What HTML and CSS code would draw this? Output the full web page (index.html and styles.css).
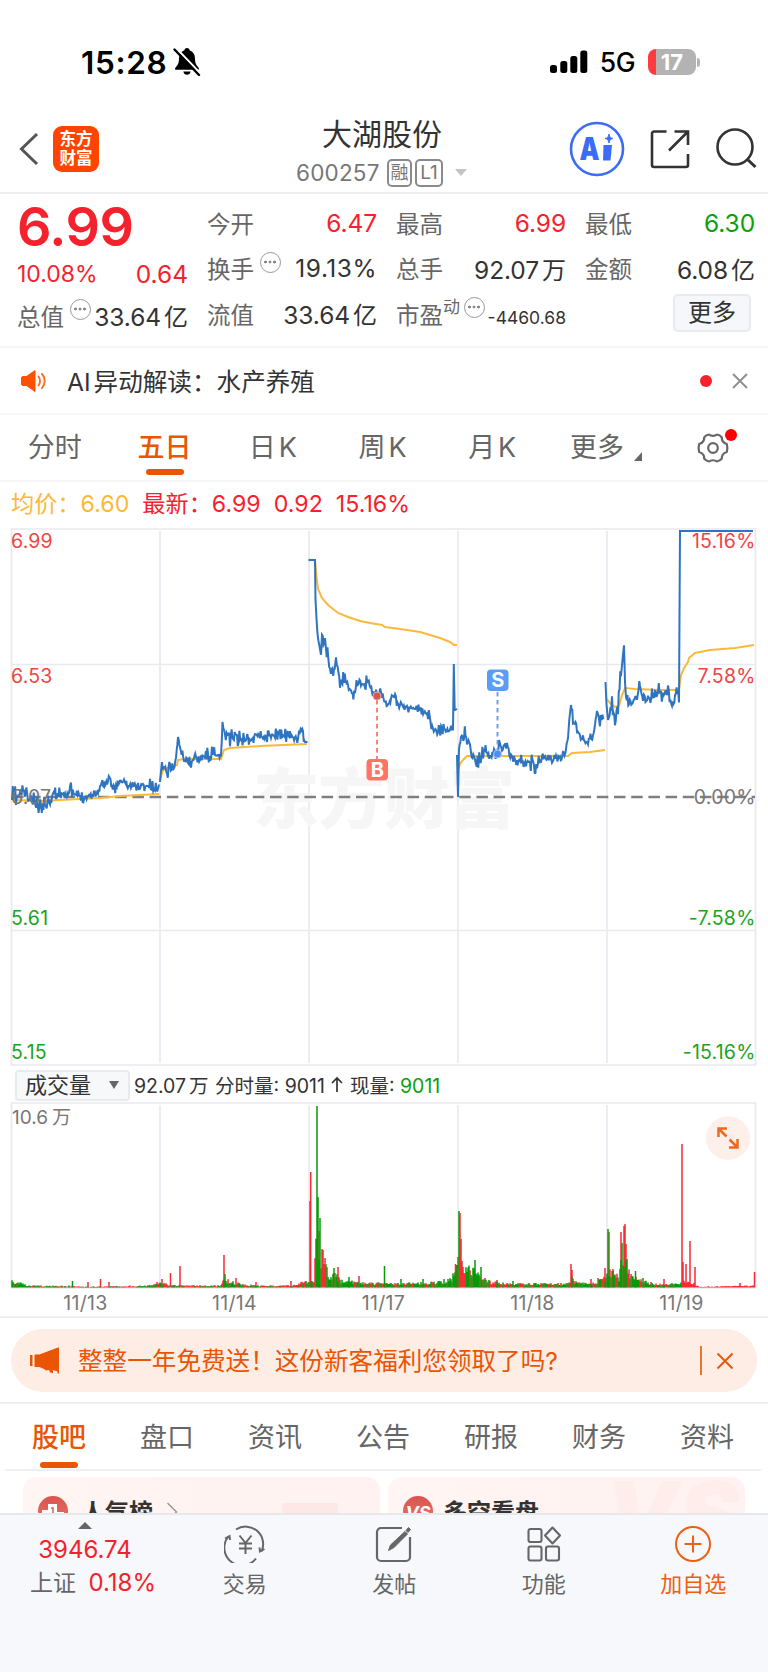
FILE: index.html
```
<!DOCTYPE html>
<html lang="zh-CN">
<head>
  <meta charset="UTF-8">
  <meta name="viewport" content="width=device-width, initial-scale=1.0">
  <title>大湖股份 600257</title>
  <link rel="stylesheet" href="styles.css">
</head>
<body>
  <!-- Phone status bar -->
  <div class="status-bar">
    <span class="clock">15:28</span>
    <svg class="bell" width="28" height="30" viewBox="0 0 28 30">
      <path d="M14 1c-1.600 0-2.600 1-2.600 2.300C8 4.500 6 7.400 6 11.500c0 5.500-1.800 7-3.600 9.200-.8 1-.3 2.100.9 2.100h21.400c1.200 0 1.700-1.100.9-2.100-1.800-2.200-3.600-3.700-3.600-9.200 0-4.100-2-7-5.400-8.200C16.600 2 15.600 1 14 1z" fill="#000"/>
      <path d="M10.300 24.500h7.400c-.4 2-1.800 3.300-3.700 3.300s-3.300-1.300-3.700-3.300z" fill="#000"/>
      <path d="M3.500 1.500L28 27" stroke="#fff" stroke-width="2"/>
      <path d="M1.500 2.500L26 28" stroke="#000" stroke-width="2.400" stroke-linecap="round"/>
    </svg>
    <svg class="signal" width="38" height="24" viewBox="0 0 38 24">
      <rect x="0" y="15" width="7" height="8" rx="2.500"/>
      <rect x="10.300" y="11" width="7" height="12" rx="2.500"/>
      <rect x="20.300" y="6" width="7" height="17" rx="2.500"/>
      <rect x="30.300" y="0.500" width="7" height="22.500" rx="2.500"/>
    </svg>
    <span class="network">5G</span>
    <div class="battery">17</div>
    <div class="battery-nub"></div>
  </div>

  <!-- Title bar -->
  <header class="header">
    <svg class="back" width="20" height="34" viewBox="0 0 20 34">
      <path d="M18 2L2.500 17 18 32" fill="none" stroke="#555" stroke-width="3"/>
    </svg>
    <div class="logo"><span>东方</span><span>财富</span></div>
    <div class="title">
      <div class="stock-name">大湖股份</div>
      <div class="stock-code">
        <span class="code">600257</span>
        <span class="badge">融</span>
        <span class="badge badge-level">L1</span>
        <span class="caret"></span>
      </div>
    </div>
    <svg class="ai" width="56" height="56" viewBox="0 0 56 56">
      <circle cx="28" cy="28" r="26" fill="none" stroke="#3b6cf6" stroke-width="2.600"/>
      <text x="10.500" y="38.500" class="ai-text" textLength="20" lengthAdjust="spacingAndGlyphs">A</text>
      <path d="M34.500 24h8.500l-1.500 15.500h-7.500z" fill="#3b6cf6"/>
      <path d="M40 13c.6 3.200 1.300 3.900 4 4.500-2.700.6-3.400 1.300-4 4.500-.6-3.200-1.300-3.900-4-4.500 2.700-.6 3.400-1.300 4-4.500z" fill="#3b6cf6" stroke="#3b6cf6"/>
    </svg>
    <svg class="share" width="40" height="40" viewBox="0 0 40 40">
      <path d="M16.500 2.500H4a2 2 0 0 0-2 2v31.500a2 2 0 0 0 2 2h32a2 2 0 0 0 2-2V25M24.500 2.500H38V16M38 2.500L19 21.500" fill="none" stroke="#333" stroke-width="2.600"/>
    </svg>
    <svg class="search" width="42" height="42" viewBox="0 0 42 42">
      <circle cx="20" cy="19" r="17.500" fill="none" stroke="#333" stroke-width="2.600"/>
      <path d="M32.500 31.500l8 7.500" stroke="#333" stroke-width="3"/>
    </svg>
  </header>

  <!-- Quote summary -->
  <section class="quote">
    <div class="quote-main">
      <div class="price">6.99</div>
      <div class="change"><span>10.08%</span><span class="diff">0.64</span></div>
      <div class="cell"><label>总值</label><i class="dots"></i><b>33.64<em>亿</em></b></div>
    </div>
    <div class="quote-col">
      <div class="cell"><label>今开</label><b class="up">6.47</b></div>
      <div class="cell"><label>换手</label><i class="dots"></i><b class="wide">19.13%</b></div>
      <div class="cell"><label>流值</label><b>33.64<em>亿</em></b></div>
    </div>
    <div class="quote-col">
      <div class="cell"><label>最高</label><b class="up">6.99</b></div>
      <div class="cell"><label>总手</label><b>92.07<em>万</em></b></div>
      <div class="cell"><label>市盈</label><sup>动</sup><i class="dots"></i><b class="small">-4460.68</b></div>
    </div>
    <div class="quote-col">
      <div class="cell"><label>最低</label><b class="down">6.30</b></div>
      <div class="cell"><label>金额</label><b>6.08<em>亿</em></b></div>
      <div class="cell"><button class="more">更多</button></div>
    </div>
  </section>

  <!-- AI notice -->
  <section class="notice">
    <svg width="26" height="24" viewBox="0 0 26 24">
      <path d="M1.500 7.500h4L14 1.500v21l-8.500-6h-4A1.500 1.500 0 0 1 .5 15V9a1.500 1.500 0 0 1 1-1.500z" fill="#ff5000" stroke="#ff5000" stroke-linejoin="round"/>
      <path d="M17.500 7.500c2 2.500 2 6.500 0 9M21 5c3.600 4 3.600 10 0 14" fill="none" stroke="#ff6a22" stroke-width="1.900" stroke-linecap="round"/>
    </svg>
    <span class="notice-text"><span class="latin">AI</span>异动解读：水产养殖</span>
    <span class="red-dot"></span>
    <svg width="16" height="16" viewBox="0 0 16 16"><path d="M1 1l14 14M15 1L1 15" stroke="#8f8f8f" stroke-width="2"/></svg>
  </section>

  <!-- Period tabs -->
  <nav class="periods">
    <span>分时</span>
    <span class="active">五日</span>
    <span class="k">日K</span>
    <span class="k">周K</span>
    <span class="k">月K</span>
    <span class="period-more">更多<i></i></span>
    <span class="gear">
      <svg width="34" height="32" viewBox="0 0 34 32">
        <path d="M13 2.500c2 1.700 6 1.700 8 0 1.500.2 3.800 1.500 4.800 2.800-.2 3 1.700 5.700 5 6.700.6 2 .6 6 0 8-3.300 1-5.200 3.700-5 6.700-1 1.300-3.300 2.600-4.800 2.800-2-1.700-6-1.700-8 0-1.500-.2-3.800-1.500-4.800-2.800.2-3-1.700-5.700-5-6.700-.6-2-.6-6 0-8 3.300-1 5.200-3.700 5-6.700 1-1.300 3.300-2.600 4.800-2.800z" fill="none" stroke="#666" stroke-width="2.200" stroke-linejoin="round"/>
        <circle cx="17" cy="16" r="4.800" fill="none" stroke="#666" stroke-width="2.200"/>
      </svg>
      <i class="red-dot gear-dot"></i>
    </span>
  </nav>

  <!-- Price chart -->
  <div class="legend">
    <span class="avg">均价：6.60</span>
    <span>最新：6.99</span>
    <span>0.92</span>
    <span>15.16%</span>
  </div>
  <svg class="price-chart" id="priceChart" width="768" height="540" viewBox="0 528 768 540">
    <g class="grid">
      <path d="M11.500 529H755.500V1065H11.500zM11.500 664.500H755.500M11.500 930.500H755.500"/>
      <path d="M160 531V1063M309 531V1063M458 531V1063M607 531V1063"/>
    </g>
    <text class="watermark" x="253" y="823" textLength="262">东方财富</text>
    <path class="base-line" d="M12 797H755"/>
    <g id="priceLines"></g>
    <g class="axis up">
      <text x="11" y="548">6.99</text>
      <text x="11" y="682.500">6.53</text>
      <text x="755.500" y="548" class="end">15.16%</text>
      <text x="755.500" y="682.500" class="end">7.58%</text>
    </g>
    <g class="axis flat">
      <text x="11" y="803.500">6.07</text>
      <text x="755.500" y="803.500" class="end">0.00%</text>
    </g>
    <g class="axis down">
      <text x="11" y="925">5.61</text>
      <text x="11" y="1058.500">5.15</text>
      <text x="755.500" y="925" class="end">-7.58%</text>
      <text x="755.500" y="1058.500" class="end">-15.16%</text>
    </g>
    <!-- buy / sell markers -->
    <path d="M377 700V759" stroke="#ff7466" stroke-width="1.800" stroke-dasharray="4.500 3.500"/>
    <circle cx="377" cy="696" r="4" fill="#d9534f" stroke="#f6a09a"/>
    <rect x="366.500" y="759" width="21.500" height="21.500" rx="4" fill="#ff7466"/>
    <text x="377.300" y="776.500" class="mark">B</text>
    <path d="M497.500 692V750" stroke="#589df8" stroke-width="1.800" stroke-dasharray="4.500 3.500"/>
    <circle cx="497.500" cy="754" r="4" fill="#4a90f5" stroke="#a5c8fb"/>
    <rect x="487" y="669.500" width="21.500" height="21.500" rx="4" fill="#589df8"/>
    <text x="497.700" y="687.200" class="mark">S</text>
  </svg>

  <!-- Volume chart -->
  <div class="volume-head">
    <div class="select">成交量<i></i></div>
    <div class="volume-info">92.07<em>万</em> 分时量: 9011 <svg width="14" height="17" viewBox="0 0 14 17"><path d="M7 16V2M2 7l5-5 5 5" fill="none" stroke="#333" stroke-width="1.700"/></svg> 现量: <span class="down">9011</span></div>
  </div>
  <div class="volume-wrap">
    <svg class="volume-chart" width="768" height="187" viewBox="0 1102 768 187">
      <g class="grid">
        <path d="M11.500 1103H755.500V1288H11.500z"/>
        <path d="M160 1105V1287M309 1105V1287M458 1105V1287M607 1105V1287"/>
      </g>
      <g id="volumeBars"></g>
      <text x="12" y="1124" class="volume-max">10.6<tspan dx="4">万</tspan></text>
    </svg>
    <div class="expand">
      <svg width="24" height="24" viewBox="0 0 24 24">
        <path d="M2.500 11V2.500H11M2.500 2.500l8 8M21.500 13v8.500H13M21.500 21.500l-8-8" fill="none" stroke="#ee6a1f" stroke-width="2.500"/>
      </svg>
    </div>
  </div>
  <div class="dates">
    <span>11/13</span><span>11/14</span><span>11/17</span><span>11/18</span><span>11/19</span>
  </div>

  <!-- Promotion -->
  <div class="promo-wrap">
    <div class="promo">
      <svg width="30" height="28" viewBox="0 0 30 28">
        <path d="M0 8h2.500v11H0zM4.500 7.500h5L26.500 1h1V.5H29v26h-1.500v-2L23 23v3l-3-.5-1-2.500-3 .5-2-1.500-4.500-2h-5z" fill="#ea5504"/>
      </svg>
      <span class="promo-text">整整一年免费送！这份新客福利您领取了吗?</span>
      <span class="promo-line"></span>
      <svg width="18" height="18" viewBox="0 0 18 18"><path d="M1.500 1.500l15 15M16.500 1.500l-15 15" stroke="#ea5504" stroke-width="1.900"/></svg>
    </div>
  </div>

  <!-- Content tabs -->
  <nav class="sections">
    <span class="active">股吧</span>
    <span>盘口</span>
    <span>资讯</span>
    <span>公告</span>
    <span>研报</span>
    <span>财务</span>
    <span>资料</span>
  </nav>
  <div class="cards">
    <div class="card">
      <span class="card-icon"><svg width="22" height="22" viewBox="0 0 22 22"><path d="M0 22V7h6V1h9v8h7v13z" fill="#fff"/><path d="M9 5h2v6M4 11v5" fill="none" stroke="#dd5a52" stroke-width="1.500"/></svg></span>
      <span>人气榜</span>
      <svg class="card-arrow" width="12" height="22" viewBox="0 0 12 22"><path d="M1.500 1l9 9-9 9" fill="none" stroke="#999" stroke-width="1.500"/></svg>
      <i class="card-shape"></i>
    </div>
    <div class="card">
      <span class="card-icon vs">VS</span>
      <span>多空看盘</span>
      <span class="card-vs">VS</span>
    </div>
  </div>

  <!-- Bottom bar -->
  <footer class="toolbar">
    <div class="index">
      <i class="index-caret"></i>
      <div class="index-value">3946.74</div>
      <div class="index-name">上证 <span>0.18%</span></div>
    </div>
    <div class="tool">
      <svg width="42" height="38" viewBox="0 0 42 38">
        <path d="M12 4.500A17.500 17.500 0 0 1 37.500 26.500M40.500 24l-4.500 2.500-.5-4M32 33.500A17.500 17.500 0 0 1 4 12M1 13.500L5.500 11l.5 4" fill="none" stroke="#666" stroke-width="2"/>
        <path d="M15.500 10.500l6 7.500 6-7.500M21.500 18v11M15 18.500h13M15 23.500h13" fill="none" stroke="#666" stroke-width="2"/>
      </svg>
      <span>交易</span>
    </div>
    <div class="tool">
      <svg width="38" height="38" viewBox="0 0 38 38">
        <path d="M27 3H6a4 4 0 0 0-4 4v25a4 4 0 0 0 4 4h25a4 4 0 0 0 4-4V12" fill="none" stroke="#666" stroke-width="2.200"/>
        <path d="M13.500 25.500l2-5.500L30 6.500l2.500 2.500L19 22.500zM31 5.500l2.500-3 2 2-2.500 3z" fill="#666" stroke="#666"/>
      </svg>
      <span>发帖</span>
    </div>
    <div class="tool">
      <svg width="36" height="38" viewBox="0 0 36 38" fill="none" stroke="#666" stroke-width="2.100">
        <rect x="2.500" y="4" width="13" height="13" rx="2"/>
        <rect x="2.500" y="21.500" width="13" height="14" rx="2"/>
        <rect x="20" y="21.500" width="13" height="14" rx="2"/>
        <path d="M26.500 2.500l7.500 8-7.500 8-7.500-8z" stroke-linejoin="round"/>
      </svg>
      <span>功能</span>
    </div>
    <div class="tool add">
      <svg width="38" height="38" viewBox="0 0 38 38" fill="none" stroke="#ee6010" stroke-width="2">
        <circle cx="19" cy="19" r="17"/>
        <path d="M19 10.500v17M10.500 19h17"/>
      </svg>
      <span>加自选</span>
    </div>
  </footer>

  <script src="chart.js"></script>
</body>
</html>
```
FILE: styles.css
```
* {
  box-sizing: border-box;
}

body {
  margin: 0;
  width: 768px;
  height: 1672px;
  overflow: hidden;
  background: #fff;
  color: #333;
  font-family: Inter, "Noto Sans CJK SC", sans-serif;
  display: flex;
  flex-direction: column;
}

body > * {
  flex-shrink: 0;
}

i, em, b {
  font-style: normal;
  font-weight: 400;
}

.up { color: #f5222d; }
.down { color: #0aa10a; }

/* status bar */
.status-bar {
  height: 106px;
  padding: 18px 68px 0 81px;
  display: flex;
  align-items: center;
  color: #000;
}

.clock {
  width: 92px;
  font-size: 31.500px;
  font-weight: 600;
  letter-spacing: 0.700px;
}

.signal {
  margin-left: auto;
}

.network {
  margin: 0 13px 0 12px;
  font-size: 26.500px;
  font-weight: 500;
  letter-spacing: -0.500px;
}

.battery {
  width: 48px;
  height: 26px;
  border-radius: 8px;
  background: linear-gradient(90deg, #ff3b3f 8px, #b3b3b3 8px);
  color: #fff;
  font-size: 22px;
  font-weight: 700;
  line-height: 26px;
  text-align: center;
  letter-spacing: 0;
}

.battery-nub {
  width: 3px;
  height: 9px;
  margin-left: 1px;
  border-radius: 0 3px 3px 0;
  background: #b3b3b3;
}

/* header */
.header {
  height: 88px;
  padding: 0 11px 0 19px;
  display: flex;
  align-items: center;
  border-bottom: 2px solid #efefef;
}

.logo {
  width: 46px;
  height: 46px;
  margin-left: 14px;
  border-radius: 9px;
  background: #ff4400;
  color: #fff;
  display: flex;
  flex-direction: column;
  justify-content: center;
  align-items: center;
  font-size: 16.500px;
  line-height: 19px;
  font-weight: 700;
}

.title {
  margin: 0 0 0 197px;
  padding-top: 9px;
  width: 172px;
}

.stock-name {
  margin-left: 26px;
  font-size: 30px;
  line-height: 38px;
  white-space: nowrap;
}

.stock-code {
  display: flex;
  align-items: center;
  height: 40px;
  color: #777;
}

.code {
  width: 91px;
  font-size: 22.500px;
  letter-spacing: 0.200px;
}

.badge {
  width: 25px;
  height: 28px;
  border: 2px solid #8a8a8a;
  border-radius: 5px;
  font-size: 18px;
  line-height: 24px;
  display: flex;
  justify-content: center;
}

.badge-level {
  width: 28px;
  margin-left: 3px;
  font-size: 19px;
}

.caret {
  margin-left: 12px;
  border: 6.500px solid transparent;
  border-top: 7px solid #c4c4c4;
  border-bottom: 0;
}

.ai { margin-left: auto; }
.share { margin-left: 25px; }
.search { margin-left: 25px; }

.ai-text {
  font-size: 32px;
  font-weight: 900;
  fill: #3b6cf6;
}

/* quote */
.quote {
  height: 154px;
  padding: 6px 13px 0 17px;
  display: grid;
  grid-template-columns: 171px 170px 170px 170px;
  column-gap: 19px;
  border-bottom: 2px solid #f6f6f6;
}

.cell {
  height: 45.500px;
  display: flex;
  align-items: center;
  font-size: 24.500px;
  white-space: nowrap;
}

.cell label {
  color: #666;
  font-size: 23.500px;
}

.cell b {
  margin-left: auto;
  letter-spacing: -0.100px;
}

.cell .wide {
  letter-spacing: 0.500px;
}

.cell em {
  margin-left: 3px;
  letter-spacing: 0;
  font-size: 24px;
}

.cell sup {
  width: 18px;
  margin-bottom: 14px;
  font-size: 17px;
  line-height: 20px;
  color: #666;
}

.cell .small {
  margin-top: 8px;
  font-size: 17.500px;
  letter-spacing: 0;
}

.dots {
  width: 21px;
  height: 21px;
  margin: 0 0 12px 6px;
  border: 1.500px solid #999;
  border-radius: 50%;
  background:
    radial-gradient(circle at 4.500px 9px, #888 1.200px, transparent 1.700px),
    radial-gradient(circle at 9px 9px, #888 1.200px, transparent 1.700px),
    radial-gradient(circle at 13.500px 9px, #888 1.200px, transparent 1.700px);
}

sup + .dots {
  margin-left: 3px;
}

.price {
  height: 54px;
  font-size: 54px;
  line-height: 54px;
  font-weight: 600;
  letter-spacing: -0.500px;
  color: #f5222d;
}

.change {
  height: 38px;
  margin-top: 1px;
  display: flex;
  justify-content: space-between;
  align-items: center;
  font-size: 23px;
  color: #f5222d;
}

.diff {
  font-size: 24.500px;
}

.more {
  width: 78px;
  height: 38px;
  margin: -1px 4px 0 auto;
  padding: 0;
  border: 2px solid #e8eaee;
  border-radius: 5px;
  background: #f5f7fa;
  color: #333;
  font: 24px/32px Inter, "Noto Sans CJK SC", sans-serif;
}

/* notice */
.notice {
  height: 67px;
  padding: 0 20px 0 21px;
  display: flex;
  align-items: center;
  border-bottom: 2px solid #f6f6f6;
}

.notice-text {
  margin: -2px auto 0 20px;
  font-size: 24.600px;
}

.latin {
  margin-right: 3px;
}

.red-dot {
  width: 12px;
  height: 12px;
  margin-right: 20px;
  border-radius: 50%;
  background: #f5222d;
}

/* tabs */
.periods,
.sections {
  display: grid;
  grid-template-columns: repeat(7, 1fr);
  height: 67px;
  font-size: 27px;
  line-height: 65px;
  text-align: center;
  color: #666;
  border-bottom: 2px solid #f6f6f6;
}

.k {
  letter-spacing: 3px;
}

.active {
  position: relative;
  color: #ea5504;
  font-weight: 500;
}

.active::after {
  content: "";
  position: absolute;
  left: 50%;
  bottom: 5px;
  width: 38px;
  height: 6px;
  margin-left: -19px;
  border-radius: 3px;
  background: #ea5504;
}

.period-more i {
  display: inline-block;
  margin: 0 0 -4px 10px;
  border-left: 8px solid transparent;
  border-bottom: 9px solid #666;
}

.period-more {
  white-space: nowrap;
  padding-left: 5px;
}

.gear {
  position: relative;
  display: flex;
  align-items: center;
  justify-content: center;
}

.gear-dot {
  position: absolute;
  left: 67px;
  top: 14px;
  background: #ff0000;
}

/* price chart */
.legend {
  height: 46px;
  padding: 0 0 1px 11px;
  display: flex;
  align-items: baseline;
  gap: 13px;
  font-size: 23.200px;
  line-height: 45px;
  color: #f5222d;
}

.legend .avg {
  color: #fbb939;
}

.price-chart,
.volume-chart {
  display: block;
}

.grid path {
  fill: none;
  stroke: #e9e9f0;
  stroke-width: 1.700;
}

.watermark {
  font-size: 66px;
  font-weight: 900;
  fill: #f6f6f6;
}

.base-line {
  stroke: #7f7f7f;
  stroke-width: 2.500;
  stroke-dasharray: 11.500 5.700;
}

.line-price {
  fill: none;
  stroke: #2f74c0;
  stroke-width: 2;
}

.line-avg {
  fill: none;
  stroke: #fbb939;
  stroke-width: 2;
}

.axis {
  font-size: 19.500px;
  letter-spacing: 0.200px;
}

.axis.up { fill: #f04444; }
.axis.down { fill: #1ca51c; }
.axis.flat { fill: #777; }

.end {
  text-anchor: end;
}

.mark {
  font-size: 20px;
  font-weight: 700;
  text-anchor: middle;
  fill: #fff;
}

/* volume */
.volume-head {
  height: 34px;
  padding-left: 15px;
  display: flex;
  align-items: center;
}

.select {
  width: 115px;
  height: 31px;
  padding: 0 9px 0 8px;
  display: flex;
  align-items: center;
  justify-content: space-between;
  border: 2px solid #e8eaee;
  border-radius: 4px;
  background: #f7f8fa;
  font-size: 22px;
  line-height: 26px;
}

.select i {
  border: 5px solid transparent;
  border-top: 8px solid #666;
  border-bottom: 0;
}

.volume-info {
  margin-left: 4px;
  margin-top: -2px;
  font-size: 19.500px;
  white-space: nowrap;
}

.volume-info em {
  margin: 0 1px 0 3px;
}

.volume-wrap {
  position: relative;
}

.volume-max {
  font-size: 19px;
  fill: #777;
}

.expand {
  position: absolute;
  left: 706px;
  top: 14px;
  width: 44px;
  height: 44px;
  border-radius: 50%;
  background: #fdf0ea;
  display: flex;
  align-items: center;
  justify-content: center;
}

.dates {
  height: 29px;
  padding: 0 12px 0 11px;
  display: grid;
  grid-template-columns: repeat(5, 1fr);
  text-align: center;
  font-size: 19.500px;
  line-height: 29px;
  letter-spacing: 0.300px;
  color: #777;
  border-bottom: 2px solid #efefef;
}

/* promo */
.promo-wrap {
  height: 86px;
  padding: 11px 11px 0;
  border-bottom: 2px solid #efefef;
}

.promo {
  height: 63px;
  padding: 0 23px 0 19px;
  display: flex;
  align-items: center;
  border-radius: 32px;
  background: #fdede4;
  color: #ea5504;
}

.promo-text {
  margin: -3px auto 0 18px;
  font-size: 24.600px;
}

.promo-line {
  width: 2px;
  height: 29px;
  margin-right: 14px;
  background: #ee7433;
}

/* sections */
.sections {
  margin: 0 7px 0 5px;
  line-height: 67px;
  border-bottom-color: #efeff4;
}

.sections .active::after {
  bottom: 3px;
}

.cards {
  height: 42px;
  padding: 6px 23px 0;
  display: grid;
  grid-template-columns: 1fr 1fr;
  column-gap: 8px;
  overflow: hidden;
}

.card {
  position: relative;
  height: 80px;
  padding: 19px 15px;
  display: flex;
  gap: 13px;
  border-radius: 14px 14px 0 0;
  background: linear-gradient(90deg, #fff5f3, #fff2f0);
  font-size: 24px;
  line-height: 34px;
  font-weight: 700;
  overflow: hidden;
}

.card + .card {
  gap: 10px;
}

.card-icon {
  width: 30px;
  height: 30px;
  border-radius: 50%;
  background: linear-gradient(#d9534f, #e8766c);
  display: flex;
  justify-content: center;
  padding-top: 7px;
  overflow: hidden;
}

.vs {
  padding: 0;
  color: #fff;
  font-size: 18px;
  font-style: italic;
}

.card-arrow {
  margin-top: 6px;
}

.card-shape {
  position: absolute;
  right: 42px;
  top: 26px;
  width: 56px;
  height: 40px;
  background: #fee8e5;
}

.card-vs {
  position: absolute;
  right: 6px;
  top: 8px;
  font-size: 92px;
  font-weight: 900;
  font-style: italic;
  line-height: 60px;
  color: #feedea;
}

/* bottom toolbar */
.toolbar {
  flex: 1;
  padding-top: 10px;
  display: grid;
  grid-template-columns: 170px repeat(4, 149.500px);
  background: #f6f8fb;
  border-top: 2px solid #e6e8ec;
  text-align: center;
  font-size: 22px;
  color: #666;
}

.index-caret {
  display: block;
  width: 0;
  margin: -3px auto 0;
  border: 7px solid transparent;
  border-top: 0;
  border-bottom: 7px solid #666;
}

.index-value {
  margin-top: 5px;
  line-height: 32px;
  font-size: 24px;
  color: #f5222d;
}

.index-name {
  padding-left: 14px;
  line-height: 34px;
  font-size: 23px;
}

.index-name span {
  margin-left: 6px;
  font-size: 24px;
  color: #f5222d;
}

.index-name {
  padding: 0 0 0 16px;
}

.tool {
  display: flex;
  flex-direction: column;
  align-items: center;
}

.tool svg {
  height: 38px;
}

.tool span {
  margin-top: 5px;
  line-height: 32px;
}

.add {
  color: #ee6010;
}
```
FILE: chart.js
```
// repeatable noise so the chart is the same on every load
let seed = 11;
function rand() {
  seed = (seed * 16807) % 2147483647;
  return seed / 2147483647;
}

// one list per trading day: x, y, noise
const priceDays = [
  [[12,800,7],[20,795,8],[24,790,6],[28,799,6],[32,800,5],[37,807,6],[45,804,4],[50,800,3],[52,794,4],[69,793,2],[71,784,1],[72,794,4],[85,797,3],[98,792,2],[100,786,4],[108,781,3],[112,787,4],[124,781,5],[127,786,3],[150,786,4],[155,790,4],[159,785,1]],
  [[160,782,0],[162,762,3],[167,773,4],[170,764,3],[173,770,4],[176,758,2],[178,737,0],[180,748,3],[184,759,2],[191,763,5],[196,757,3],[205,755,4],[215,755,4],[221,757,1],[222.5,722,0],[225,735,4],[230,735,7],[237,742,6],[245,737,4],[252,740,3],[255,734,4],[263,737,4],[275,734,4],[290,737,4],[303,736,4],[305,742,0],[307.5,742,0]],
  [[308.5,560,0],[315,560,0],[315.5,600,0],[316.5,615,2],[317.5,635,2],[321,652,4],[322,635,3],[325,645,5],[330,665,5],[334,675,4],[336,657,1],[340,683,4],[344,676,4],[348,688,3],[355,693,5],[358,681,3],[361,685,4],[368,682,4],[372,692,3],[377,694,3],[381,692,3],[385,700,3],[389,704,3],[391,695,3],[400,705,3],[410,708,3],[420,710,4],[428,715,5],[433,728,3],[438,730,5],[445,729,4],[453,730,2],[453.8,664,0],[454.7,710,0],[457,709,0]],
  [[457,755,0],[458,797,0],[459,750,2],[461,738,3],[464,733,4],[467,738,5],[470,750,6],[475,758,6],[480,762,6],[484,750,4],[490,755,4],[498,752,3],[499,740,2],[502,750,3],[507,742,3],[511,758,4],[518,761,4],[530,762,5],[537,766,5],[542,758,3],[552,760,4],[560,757,4],[566,753,4],[568,735,2],[570,712,2],[571,705,0],[573,720,4],[577,731,3],[583,740,3],[588,743,4],[593,737,5],[595,725,2],[597,711,1],[600,722,4],[604,716,2]],
  [[605.5,682,0],[606.5,705,2],[608,720,2],[612,708,7],[615,717,7],[618,716,6],[619.5,690,8],[622,665,6],[624,645,1],[625,680,3],[626,700,4],[632,703,6],[637,698,5],[640,683,3],[643,700,6],[648,700,5],[652,693,4],[658,692,6],[664,694,6],[668,692,5],[672,703,4],[675,693,4],[679,695,5],[680,531,0],[753,531,0]]
];

const avgDays = [
  [[12,800],[45,801],[60,800],[100,798],[120,796],[140,795],[159,794]],
  [[160,780],[163,770],[170,767],[177,765],[178,760],[184,759],[221,759],[224,750],[230,748],[260,746],[307,744]],
  [[315,560],[316.5,577],[318,589],[322,598],[328,605],[338,613],[348,617],[360,621],[370,623],[382,625],[385,627],[400,629],[420,632],[440,638],[450,642],[454,645],[457,645]],
  [[458,770],[460,764],[463,760],[467,756],[540,756],[568,756],[572,753],[590,752],[605,750]],
  [[606,698],[610,703],[615,707],[619,706],[622,695],[625,688],[635,689],[660,690],[679,690],[681,675],[684,668],[688,662],[689,658],[695,653],[710,650],[735,648],[754,645]]
];

function addPath(group, d, className) {
  const path = document.createElementNS('http://www.w3.org/2000/svg', 'path');
  path.setAttribute('d', d);
  path.setAttribute('class', className);
  group.appendChild(path);
}

function noisyPoints(points) {
  const result = [points[0].slice(0, 2)];
  for (let i = 1; i < points.length; i++) {
    const [x0, y0, n0] = points[i - 1];
    const [x1, y1, n1] = points[i];
    const steps = n0 + n1 === 0 ? 1 : Math.max(1, Math.round((x1 - x0) / 0.8));
    for (let s = 1; s <= steps; s++) {
      const t = s / steps;
      const noise = n0 + (n1 - n0) * t;
      const spread = (rand() - 0.5) * 2;
      result.push([x0 + (x1 - x0) * t, y0 + (y1 - y0) * t + spread * Math.abs(spread) * noise * 1.9]);
    }
  }
  return result;
}

const lines = document.getElementById('priceLines');
avgDays.forEach(day => addPath(lines, 'M' + day.join('L'), 'line-avg'));
priceDays.forEach(day => {
  const points = noisyPoints(day).map(p => p[0].toFixed(1) + ',' + p[1].toFixed(1));
  addPath(lines, 'M' + points.join('L'), 'line-price');
});

// volume: background level along the day as x, height, share of red
const volumeLevels = [
  [12,5,.2],[16,4,.3],[30,2,.4],[60,2,.7],[90,1,.6],[150,2,.7],[160,5,.7],[166,3,.4],[175,2,.6],[200,2,.5],[221,2,.7],
  [224,12,.5],[227,6,.4],[240,3,.6],[260,2,.7],[290,2,.7],[302,4,.6],[314,6,.6],[316,40,.1],[320,34,.4],[325,24,.4],[329,13,.3],[335,12,.3],
  [341,6,.4],[360,4,.4],[390,3,.4],[430,4,.4],[445,5,.5],[452,8,.5],[457,22,.5],[461,24,.7],[466,17,.3],[475,17,.2],[482,9,.5],[490,5,.6],
  [510,3,.5],[565,3,.6],[571,8,.6],[577,4,.4],[595,4,.6],[606,9,.6],[609,15,.3],[614,11,.4],[619,9,.3],[622,34,.3],[626,24,.4],
  [630,13,.3],[637,7,.4],[645,5,.3],[656,3,.5],[680,3,.7],[682,7,1],[690,5,1],[700,1,1],[755,2,1]
];
const volumeSpikes = [
  [72.5,6,'g'],[88,5,'r'],[100.5,8,'r'],[109,5,'r'],[162,8,'r'],[170.5,14,'r'],[180,21,'r'],[224,32,'r'],[225,13,'g'],[236,9,'r'],
  [256,5,'r'],[291,6,'r'],[310,86,'r'],[310.7,115,'r'],[316,41,'g'],[317,181,'g'],[318,90,'g'],[319,56,'r'],[320,69,'g'],[323,34,'r'],[325,29,'r'],
  [327,18,'r'],[334,19,'g'],[338,20,'r'],[349,10,'g'],[359,11,'r'],[384.5,21,'g'],[401,8,'g'],[423,8,'g'],[444,8,'g'],
  [455.5,23,'r'],[457,22,'g'],[459,76,'g'],[460,74,'r'],[461,48,'r'],[462,26,'r'],[475,27,'g'],[481,20,'g'],[497,7,'r'],[513,6,'g'],
  [571,23,'r'],[572,17,'r'],[591,8,'r'],[598,9,'r'],[605,19,'r'],[608,58,'g'],[609,55,'r'],[613,18,'r'],[621,55,'r'],[622,44,'g'],[624,61,'r'],
  [625,63,'r'],[626,43,'r'],[627,28,'g'],[635.5,16,'g'],[643,9,'g'],[664,8,'r'],[682,143,'r'],[683,25,'r'],[686,23,'r'],[690,46,'r'],
  [695,20,'r'],[740,4,'r'],[754.5,15,'r']
];

let red = '';
let green = '';
function addBar(x, height, isRed) {
  const bar = `M${x} 1287.5V${(1287 - height).toFixed(1)}`;
  if (isRed) red += bar; else green += bar;
}
for (let i = 1; i < volumeLevels.length; i++) {
  const [x0, h0, share] = volumeLevels[i - 1];
  const [x1, h1] = volumeLevels[i];
  for (let x = x0; x < x1; x++) {
    const level = h0 + (h1 - h0) * (x - x0) / (x1 - x0);
    addBar(x, level * (0.55 + rand() * 0.8) - (level < 3 ? 0.8 : 0), rand() < share);
  }
}
volumeSpikes.forEach(([x, height, color]) => addBar(x, height, color === 'r'));

const bars = document.getElementById('volumeBars');
addPath(bars, red, 'bar-red');
addPath(bars, green, 'bar-green');
bars.children[0].setAttribute('stroke', '#f52c34');
bars.children[1].setAttribute('stroke', '#069b06');
bars.setAttribute('stroke-width', '1.5');
```
